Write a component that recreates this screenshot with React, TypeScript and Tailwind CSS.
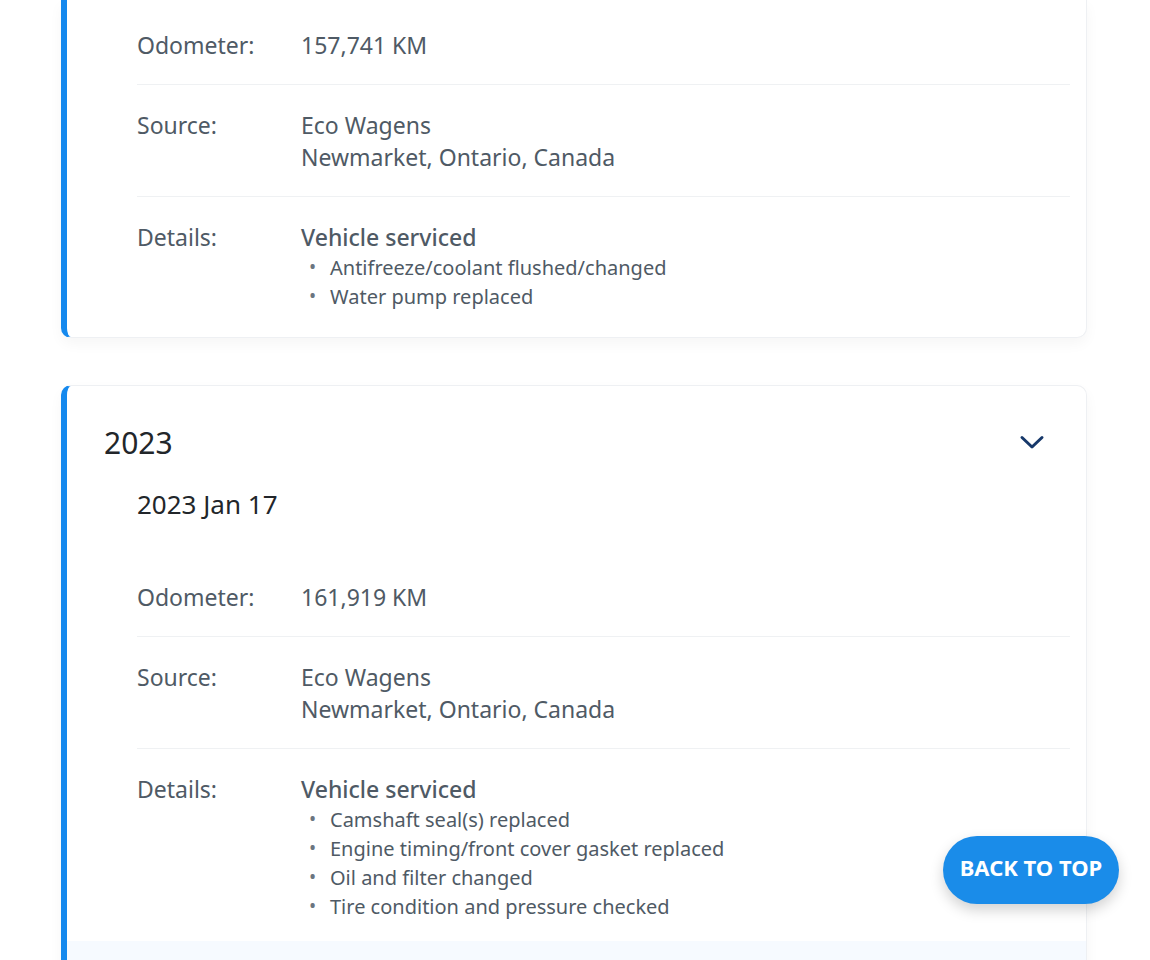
import React from "react";

const font = { fontFamily: '"Noto Sans", "Open Sans", sans-serif' };

function Row({
  label,
  children,
  last,
  first,
}: {
  label: string;
  children: React.ReactNode;
  last?: boolean;
  first?: boolean;
}) {
  return (
    <div
      className={`flex ${first ? "pt-[29px]" : "pt-[24px]"} ${last ? "pb-[20px]" : "pb-[23px] border-b border-[#eff1f3]"}`}
    >
      <div className="w-[164px] shrink-0 text-[23px] leading-[32px] text-[#4f5a65]">{label}</div>
      <div className="flex-1 text-[23px] leading-[32px] text-[#4f5a65]">{children}</div>
    </div>
  );
}

function Details({ items }: { items: string[] }) {
  return (
    <div>
      <div className="font-medium text-[#4f5a65]">Vehicle serviced</div>
      <ul>
        {items.map((t) => (
          <li key={t} className="flex text-[20px] leading-[29px] text-[#4f5a65]">
            <span className="w-[29px] shrink-0 pl-[8px] text-[19px] text-[#6b7580]">•</span>
            <span>{t}</span>
          </li>
        ))}
      </ul>
    </div>
  );
}

function Source() {
  return (
    <div>
      <div>Eco Wagens</div>
      <div>Newmarket, Ontario, Canada</div>
    </div>
  );
}

export default function App() {
  return (
    <div className="relative h-[960px] w-[1150px] overflow-hidden bg-white" style={font}>
      <div className="ml-[61px] w-[1026px]">
        {/* Card 1 (top cut off) */}
        <div className="rounded-b-[10px] border-l-[6px] border-l-[#1589ee] border-r border-b border-[#eef0f3] bg-white pb-[6px] shadow-[0_6px_14px_rgba(0,0,0,0.04)]">
          <div className="ml-[70px] mr-[16px]">
            <Row label="Odometer:" first>
              157,741 KM
            </Row>
            <Row label="Source:">
              <Source />
            </Row>
            <Row label="Details:" last>
              <Details items={["Antifreeze/coolant flushed/changed", "Water pump replaced"]} />
            </Row>
          </div>
        </div>

        {/* Card 2 */}
        <div className="mt-[47px] rounded-t-[10px] border-l-[6px] border-l-[#1589ee] border-t border-r border-[#eef0f3] bg-white shadow-[0_6px_14px_rgba(0,0,0,0.04)]">
          <div className="flex items-center justify-between pl-[37px] pr-[41px] pt-[38px]">
            <div className="text-[30px] leading-[38px] text-[#22262a]">2023</div>
            <svg width="26" height="16" viewBox="0 0 26 16" fill="none" className="-mt-[2px]">
              <path d="M3 3.5 L13 13 L23 3.5" stroke="#16386a" strokeWidth="3" strokeLinecap="round" strokeLinejoin="round" />
            </svg>
          </div>
          <div className="ml-[70px] mr-[16px]">
            <div className="mt-[26px] mb-[37px] text-[26px] leading-[32px] text-[#22262a]">2023 Jan 17</div>
            <Row label="Odometer:">161,919 KM</Row>
            <Row label="Source:">
              <Source />
            </Row>
            <Row label="Details:" last>
              <Details
                items={[
                  "Camshaft seal(s) replaced",
                  "Engine timing/front cover gasket replaced",
                  "Oil and filter changed",
                  "Tire condition and pressure checked",
                ]}
              />
            </Row>
          </div>
          <div className="h-[60px] bg-[#f6faff]" />
        </div>
      </div>

      <button className="absolute left-[943px] top-[836px] h-[68px] w-[176px] rounded-full bg-[#1a8ce9] pb-[5px] text-[22px] font-bold text-white shadow-[0_6px_14px_rgba(0,0,0,0.18)]">
        BACK TO TOP
      </button>
    </div>
  );
}
